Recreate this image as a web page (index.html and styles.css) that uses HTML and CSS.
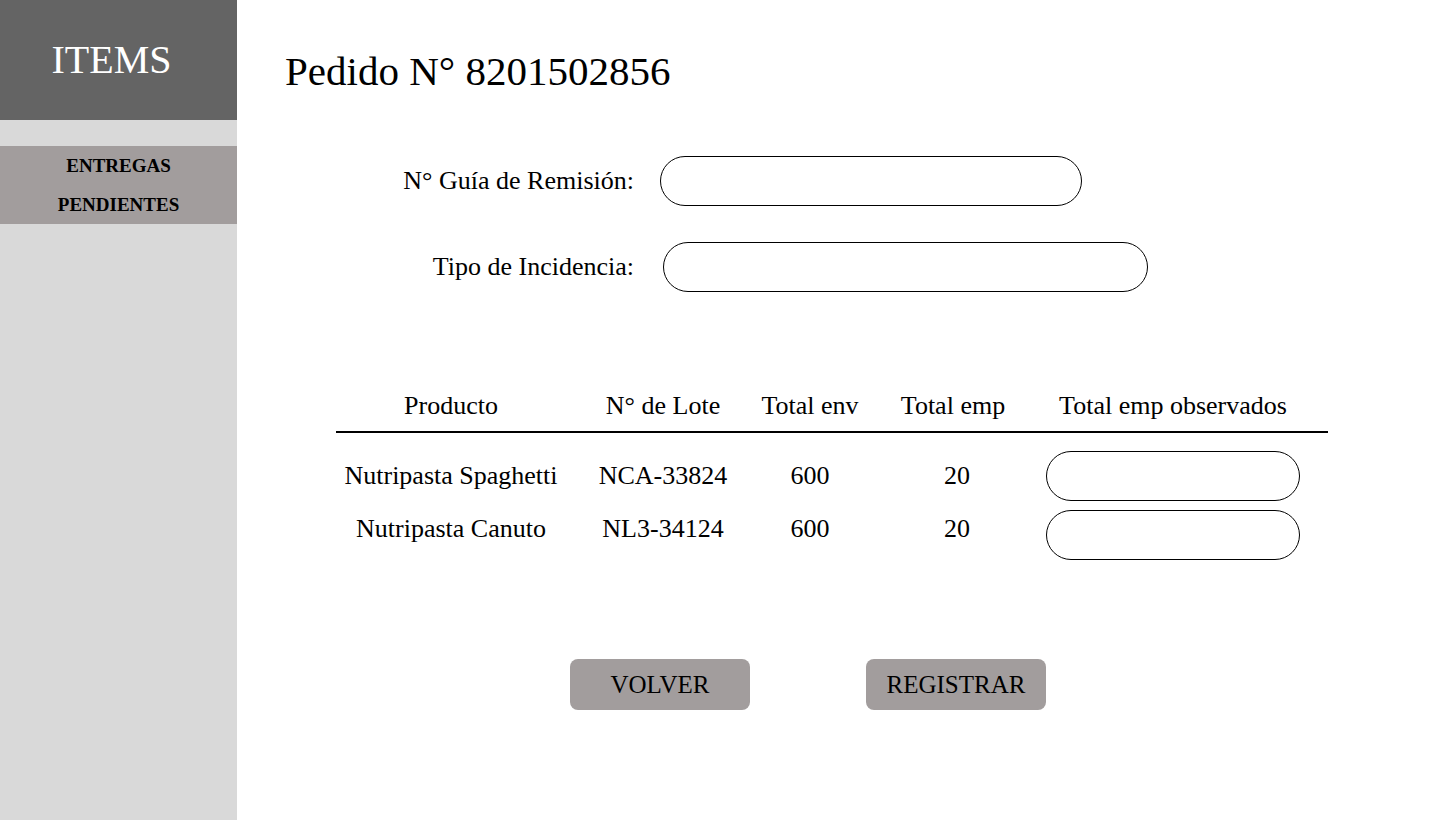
FILE: index.html
```html
<!DOCTYPE html>
<html lang="es">
<head>
<meta charset="utf-8">
<title>Pedido</title>
<link rel="stylesheet" href="styles.css">
</head>
<body>
<aside class="sidebar">
  <div class="brand">ITEMS</div>
  <nav class="nav">
    <div class="nav-item">ENTREGAS<br>PENDIENTES</div>
  </nav>
</aside>
<main class="main">
  <h1 class="title">Pedido N° 8201502856</h1>
  <div class="form">
    <div class="field">
      <label class="label">N° Guía de Remisión:</label>
      <div class="pill input-guia"></div>
    </div>
    <div class="field">
      <label class="label">Tipo de Incidencia:</label>
      <div class="pill input-tipo"></div>
    </div>
  </div>
  <div class="table">
    <div class="thead">
      <div class="cell">Producto</div>
      <div class="cell">N° de Lote</div>
      <div class="cell">Total env</div>
      <div class="cell">Total emp</div>
      <div class="cell">Total emp observados</div>
    </div>
    <div class="trow">
      <div class="cell">Nutripasta Spaghetti</div>
      <div class="cell">NCA-33824</div>
      <div class="cell">600</div>
      <div class="cell num">20</div>
      <div class="pill pill-small"></div>
    </div>
    <div class="trow trow-2">
      <div class="cell up">Nutripasta Canuto</div>
      <div class="cell up">NL3-34124</div>
      <div class="cell up">600</div>
      <div class="cell up num">20</div>
      <div class="pill pill-small"></div>
    </div>
  </div>
  <div class="actions">
    <button class="btn">VOLVER</button>
    <button class="btn">REGISTRAR</button>
  </div>
</main>
</body>
</html>
```

FILE: styles.css
```css
* { box-sizing: border-box; }
html, body { margin: 0; padding: 0; }
body {
  display: flex;
  width: 1440px;
  height: 820px;
  background: #ffffff;
  font-family: "Liberation Serif", "Times New Roman", serif;
  color: #000;
  overflow: hidden;
}
.sidebar {
  width: 237px;
  flex: none;
  background: #d9d9d9;
}
.brand {
  height: 120px;
  background: #646464;
  color: #fff;
  font-size: 40px;
  display: flex;
  align-items: center;
  justify-content: center;
  padding-right: 14px;
  padding-bottom: 2px;
}
.nav { margin-top: 26px; }
.nav-item {
  height: 78px;
  background: #a29d9d;
  text-align: center;
  font-weight: bold;
  font-size: 19px;
  line-height: 39px;
}
.main {
  flex: 1;
  padding: 47px 0 0 48px;
}
.title {
  margin: 0;
  font-weight: normal;
  font-size: 41px;
  line-height: 48px;
}
.form {
  margin-top: 61px;
  display: flex;
  flex-direction: column;
  gap: 36px;
}
.field {
  display: flex;
  align-items: center;
  gap: 26px;
}
.label {
  width: 349px;
  text-align: right;
  font-size: 26px;
}
.pill {
  height: 50px;
  border: 1px solid #000;
  border-radius: 25px;
  background: #fff;
}
.input-guia { width: 422px; }
.input-tipo { width: 485px; margin-left: 3px; }
.table {
  margin-top: 95px;
  margin-left: 51px;
  width: 992px;
}
.thead, .trow {
  display: grid;
  grid-template-columns: 230px 194px 100px 186px 254px;
  align-items: center;
  font-size: 26px;
}
.thead {
  height: 46px;
  padding-bottom: 6px;
  border-bottom: 2px solid #000;
}
.cell {
  text-align: center;
  white-space: nowrap;
}
.num { padding-left: 8px; }
.trow { margin-top: 18px; }
.trow-2 { margin-top: 9px; }
.up { padding-bottom: 12px; }
.actions {
  margin-top: 99px;
  margin-left: 285px;
  display: flex;
  gap: 116px;
}
.btn {
  width: 180px;
  height: 51px;
  border: none;
  border-radius: 8px;
  background: #a29d9d;
  font-family: "Liberation Serif", "Times New Roman", serif;
  font-size: 25px;
  color: #000;
  padding: 0;
}
```
